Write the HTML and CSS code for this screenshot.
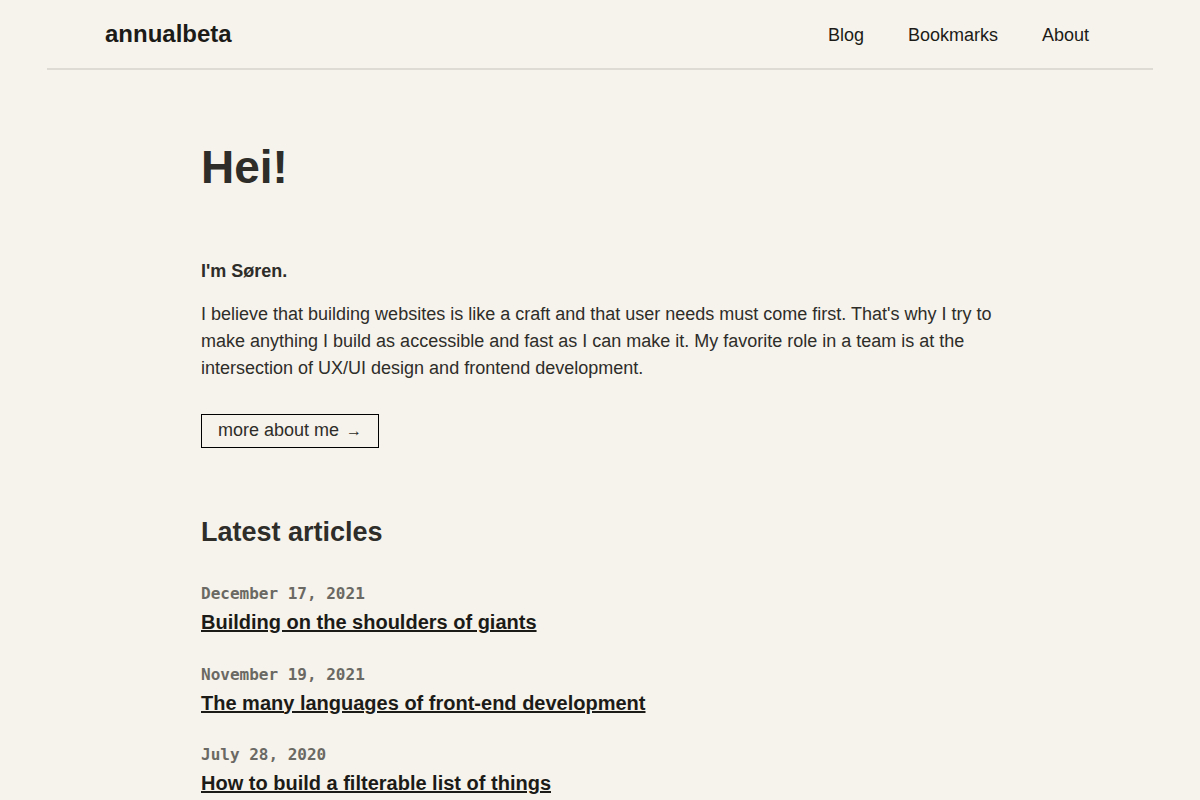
FILE: index.html
```html
<!DOCTYPE html>
<html lang="en">
<head>
<meta charset="UTF-8" />
<title>annualbeta</title>
<meta name="viewport" content="width=device-width, initial-scale=1.0" />
<link rel="stylesheet" href="styles.css">
</head>
<body>

<header class="site-header">
  <a class="logo" href="#">annualbeta</a>
  <nav class="nav">
    <a href="#">Blog</a>
    <a href="#">Bookmarks</a>
    <a href="#">About</a>
  </nav>
</header>

<main class="content">
  <h1>Hei!</h1>

  <p class="intro">I'm Søren.</p>
  <p>I believe that building websites is like a craft and that user needs must come first. That's why I try to make anything I build as accessible and fast as I can make it. My favorite role in a team is at the intersection of UX/UI design and frontend development.</p>

  <a class="more" href="#">more about me <span class="arrow">→</span></a>

  <h2>Latest articles</h2>

  <ul class="articles">
    <li>
      <time>December 17, 2021</time>
      <a href="#">Building on the shoulders of giants</a>
    </li>
    <li>
      <time>November 19, 2021</time>
      <a href="#">The many languages of front-end development</a>
    </li>
    <li>
      <time>July 28, 2020</time>
      <a href="#">How to build a filterable list of things</a>
    </li>
  </ul>
</main>

</body>
</html>
```

FILE: styles.css
```css
body {
  margin: 0;
  background: #f6f3ec;
  color: #2e2d29;
  font-family: "Liberation Sans", Arial, sans-serif;
}

a {
  color: inherit;
}

/* header */
.site-header {
  max-width: 1106px;
  margin: 0 auto;
  height: 70px;
  border-bottom: 2px solid #dedbd4;
  display: flex;
  align-items: center;
  justify-content: space-between;
  padding: 0 42px 0 58px;
  box-sizing: border-box;
}
.logo {
  font-size: 24px;
  font-weight: bold;
  color: #1c1b18;
  text-decoration: none;
}
.nav {
  display: flex;
  margin-top: 2px;
}
.nav a {
  font-size: 18px;
  color: #1c1b18;
  text-decoration: none;
  padding: 0 22px;
}

/* main */
.content {
  width: 798px;
  margin: 0 auto;
  padding: 70px 0 40px;
}
h1 {
  font-size: 46px;
  margin: 0 0 64px;
  color: #2e2d29;
}
p {
  font-size: 18px;
  line-height: 27px;
  margin: 0 0 15px;
}
.intro {
  font-weight: bold;
  margin-bottom: 16px;
}
.more {
  display: inline-block;
  border: 1px solid #000;
  padding: 3px 16px 4px;
  font-size: 18px;
  line-height: 25px;
  text-decoration: none;
  margin-top: 17px;
  color: #2e2d29;
}
.arrow {
  font-size: 16px;
  margin-left: 2px;
}
h2 {
  font-size: 27px;
  margin: 69px 0 33px;
}
.articles {
  list-style: none;
  margin: 0;
  padding: 0;
}
.articles li {
  margin-bottom: 24.5px;
}
.articles time {
  display: block;
  font-family: "DejaVu Sans Mono", monospace;
  font-weight: bold;
  font-size: 16px;
  line-height: 26px;
  color: #6b6963;
}
.articles a {
  display: block;
  font-size: 20px;
  line-height: 30px;
  font-weight: bold;
  color: #1c1b18;
}
```
